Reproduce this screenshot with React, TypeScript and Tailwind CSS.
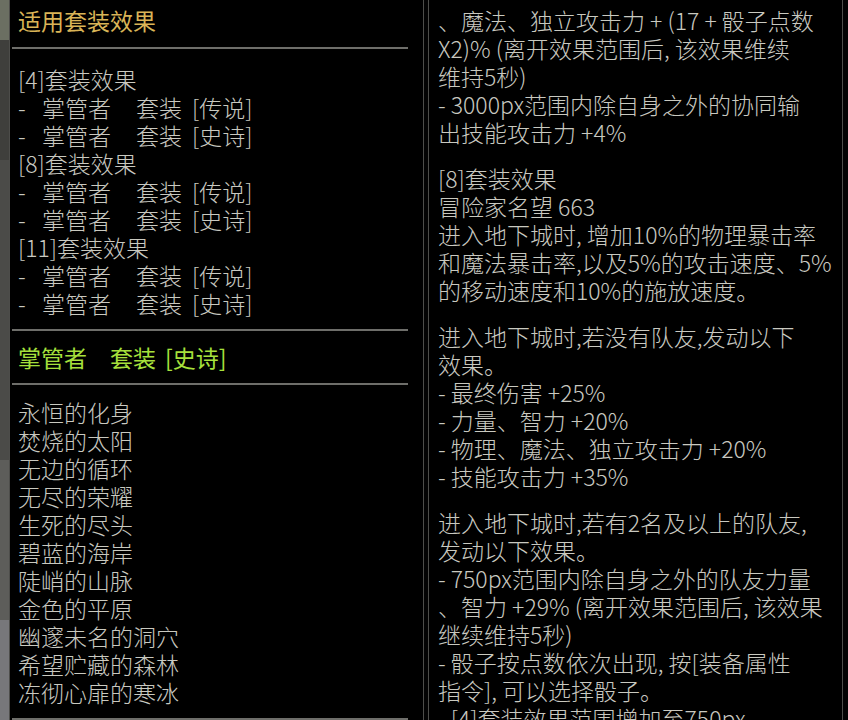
const setRows = [
  { head: '[4]套装效果' },
  { item: '[传说]' },
  { item: '[史诗]' },
  { head: '[8]套装效果' },
  { item: '[传说]' },
  { item: '[史诗]' },
  { head: '[11]套装效果' },
  { item: '[传说]' },
  { item: '[史诗]' },
];

const pieces = [
  '永恒的化身',
  '焚烧的太阳',
  '无边的循环',
  '无尽的荣耀',
  '生死的尽头',
  '碧蓝的海岸',
  '陡峭的山脉',
  '金色的平原',
  '幽邃未名的洞穴',
  '希望贮藏的森林',
  '冻彻心扉的寒冰',
];

// right panel text, grouped into paragraphs; each string is one rendered line
const paragraphs = [
  [
    '、魔法、独立攻击力 + (17 + 骰子点数',
    'X2)% (离开效果范围后, 该效果维续',
    '维持5秒)',
    '- 3000px范围内除自身之外的协同输',
    '出技能攻击力 +4%',
  ],
  [
    '[8]套装效果',
    '冒险家名望 663',
    '进入地下城时, 增加10%的物理暴击率',
    '和魔法暴击率,以及5%的攻击速度、5%',
    '的移动速度和10%的施放速度。',
  ],
  [
    '进入地下城时,若没有队友,发动以下',
    '效果。',
    '- 最终伤害 +25%',
    '- 力量、智力 +20%',
    '- 物理、魔法、独立攻击力 +20%',
    '- 技能攻击力 +35%',
  ],
  [
    '进入地下城时,若有2名及以上的队友,',
    '发动以下效果。',
    '- 750px范围内除自身之外的队友力量',
    '、智力 +29% (离开效果范围后, 该效果',
    '继续维持5秒)',
    '- 骰子按点数依次出现, 按[装备属性',
    '指令], 可以选择骰子。',
    '- [4]套装效果范围增加至750px',
  ],
];

function Divider() {
  return <div className="ml-[2px] mr-[15px] h-[2px] bg-[#6e6e6a]" />;
}

export default function App() {
  return (
    <div
      className="w-[848px] h-[720px] flex bg-[#030303] overflow-hidden text-[23px] leading-[28px] font-light text-[#c9c9c0]"
      style={{ fontFamily: '"Noto Sans CJK SC", "Noto Sans", sans-serif' }}
    >
      {/* game background peeking through on the left */}
      <div className="w-[9px] h-full flex flex-col shrink-0">
        <div className="h-[40px] bg-[#6b6f62]" />
        <div className="h-[120px] bg-[#3f3f3c]" />
        <div className="h-[300px] bg-[#4b4b48]" />
        <div className="h-[160px] bg-[#5d5d5a]" />
        <div className="flex-1 bg-[#77777a]" />
      </div>

      {/* left panel */}
      <div className="w-[415px] h-full shrink-0 border-l border-r border-[#4d4d4a] bg-black flex flex-col">
        <div className="pl-[8px] pt-[6px] pb-[13px] text-[#d9b457] font-normal">适用套装效果</div>
        <Divider />
        <div className="pl-[8px] pt-[16px] pb-[12px]">
          {setRows.map((r, i) =>
            r.head ? (
              <div key={i} className="whitespace-nowrap">{r.head}</div>
            ) : (
              <div key={i} className="flex whitespace-nowrap">
                <span className="w-[24px]">-</span>
                <span>掌管者</span>
                <span className="ml-[25px]">套装</span>
                <span className="ml-[10px]">{r.item}</span>
              </div>
            )
          )}
        </div>
        <Divider />
        <div className="flex pl-[8px] pt-[12px] pb-[12px] text-[#a6e03c] font-normal whitespace-nowrap">
          <span>掌管者</span>
          <span className="ml-[23px]">套装</span>
          <span className="ml-[9px]">[史诗]</span>
        </div>
        <Divider />
        <div className="pl-[8px] pt-[13px] flex-1">
          {pieces.map((p) => (
            <div key={p} className="whitespace-nowrap">{p}</div>
          ))}
        </div>
        <Divider />
      </div>

      <div className="w-[4px] shrink-0" />

      {/* right panel */}
      <div className="w-[415px] h-full shrink-0 border-l border-r border-[#4d4d4a] bg-black pl-[9px] pt-[6px] flex flex-col gap-[18px]">
        {paragraphs.map((lines, i) => (
          <div key={i}>
            {lines.map((l, j) => (
              <div key={j} className="whitespace-nowrap">{l}</div>
            ))}
          </div>
        ))}
      </div>
    </div>
  );
}
